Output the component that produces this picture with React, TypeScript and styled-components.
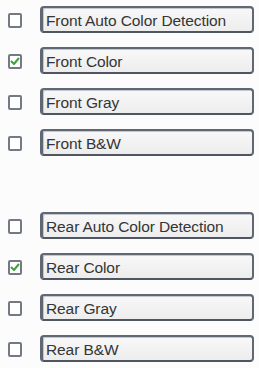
import React from 'react';
import styled, { createGlobalStyle } from 'styled-components';

const GlobalStyle = createGlobalStyle`
  html, body {
    margin: 0;
    padding: 0;
    background: #fcfcfc;
    font-family: 'Liberation Sans', Arial, sans-serif;
  }
`;

const Panel = styled.div`
  width: 259px;
  height: 368px;
  box-sizing: border-box;
  padding: 6px 5px 0 8px;
  display: flex;
  flex-direction: column;
  gap: 56px;
`;

const Group = styled.div`
  display: flex;
  flex-direction: column;
  gap: 14px;
`;

const Row = styled.div`
  display: flex;
  align-items: center;
  gap: 18px;
  height: 27px;
`;

const Box = styled.span<{ $checked: boolean }>`
  width: 14px;
  height: 15px;
  box-sizing: border-box;
  border: 2px solid #737a84;
  border-radius: 2px;
  background: #ffffff;
  display: flex;
  align-items: center;
  justify-content: center;
  flex: none;
  margin-top: 1px;
`;

const Field = styled.div`
  flex: 1;
  height: 27px;
  box-sizing: border-box;
  border: 2px solid #606874;
  border-left-width: 3px;
  border-bottom-color: #4f5661;
  border-radius: 4px;
  background: linear-gradient(#f8f8f8, #ededed);
  box-shadow: inset 1px 1px 0 #c4c8cd;
  display: flex;
  align-items: center;
  padding: 3px 0 0 3px;
  font-size: 15.5px;
  color: #353535;
  letter-spacing: -0.1px;
  white-space: nowrap;
`;

const Check = () => (
  <svg width="10" height="9" viewBox="0 0 10 9">
    <path d="M1.5 4.5 L4 7 L8.5 1.5" fill="none" stroke="#3ea33e" strokeWidth="2" strokeLinecap="round" strokeLinejoin="round" />
  </svg>
);

type Item = { label: string; checked: boolean };

const front: Item[] = [
  { label: 'Front Auto Color Detection', checked: false },
  { label: 'Front Color', checked: true },
  { label: 'Front Gray', checked: false },
  { label: 'Front B&W', checked: false },
];

const rear: Item[] = [
  { label: 'Rear Auto Color Detection', checked: false },
  { label: 'Rear Color', checked: true },
  { label: 'Rear Gray', checked: false },
  { label: 'Rear B&W', checked: false },
];

const OptionGroup = ({ items }: { items: Item[] }) => (
  <Group>
    {items.map((item) => (
      <Row key={item.label}>
        <Box $checked={item.checked}>{item.checked && <Check />}</Box>
        <Field>{item.label}</Field>
      </Row>
    ))}
  </Group>
);

export default function App() {
  return (
    <>
      <GlobalStyle />
      <Panel>
        <OptionGroup items={front} />
        <OptionGroup items={rear} />
      </Panel>
    </>
  );
}
